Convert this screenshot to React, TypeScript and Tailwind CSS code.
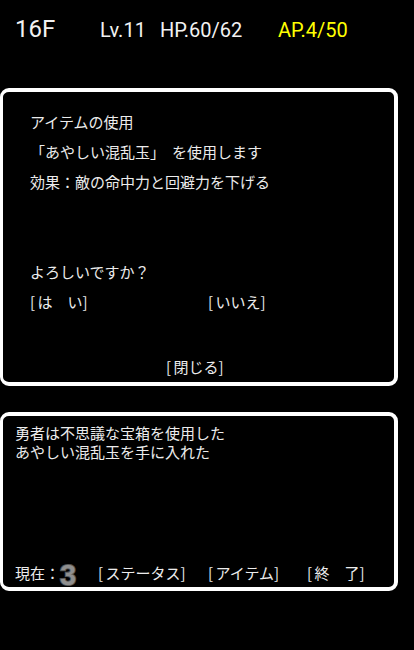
import React from "react";

const B = ({ c }: { c: string }) => (
  <span className="inline-block w-[7.5px]">{c}</span>
);

export default function App() {
  return (
    <div className="w-[414px] h-[650px] bg-black overflow-hidden">
      {/* header */}
      <div className="h-[88px] pt-[14px] pl-[15px] flex items-baseline font-['Roboto',sans-serif] text-[#f2f2f2]">
        <span className="w-[85px] text-[24px] leading-[30px]">16F</span>
        <span className="w-[60px] text-[20px] leading-[30px]">Lv.11</span>
        <span className="w-[118px] text-[20px] leading-[30px]">HP.60/62</span>
        <span className="text-[20px] leading-[30px] text-[#ffff00]">AP.4/50</span>
      </div>

      {/* dialog box */}
      <div className="w-[398px] h-[298px] border-4 border-l-[3px] border-white rounded-[9px] flex flex-col pl-[27px] pt-[15px] font-['Noto_Sans_CJK_JP',sans-serif] text-[15px] leading-[30px] text-[#ececec]">
        <div>アイテムの使用</div>
        <div>
          「あやしい混乱玉」<span className="inline-block w-[7px]" />を使用します
        </div>
        <div>効果：敵の命中力と回避力を下げる</div>
        <div className="h-[60px]" />
        <div>よろしいですか？</div>
        <div className="flex">
          <span className="w-[178px]">
            <B c="[" />は　い<B c="]" />
          </span>
          <span>
            <B c="[" />いいえ<B c="]" />
          </span>
        </div>
        <div className="mt-auto pl-[136px]">
          <B c="[" />閉じる<B c="]" />
        </div>
      </div>

      {/* message box */}
      <div className="mt-[26px] w-[398px] h-[179px] border-4 border-l-[3px] border-white rounded-[9px] flex flex-col pl-[12px] pt-[7px] pb-[3px] font-['Noto_Sans_CJK_JP',sans-serif] text-[15px] leading-[19px] text-[#ececec]">
        <div>勇者は不思議な宝箱を使用した</div>
        <div>あやしい混乱玉を手に入れた</div>
        <div className="mt-auto flex items-center h-[24px]">
          <span className="w-[45px]">現在：</span>
          <span className="w-[38px] h-[24px] flex items-center">
            <span className="font-['Liberation_Sans',sans-serif] font-bold text-[29px] leading-[24px] translate-y-[3px] text-[#8f8f8f] [-webkit-text-stroke:2px_#555555] [paint-order:stroke_fill]">
              3
            </span>
          </span>
          <span className="w-[110px]">
            <B c="[" />ステータス<B c="]" />
          </span>
          <span className="w-[99px]">
            <B c="[" />アイテム<B c="]" />
          </span>
          <span>
            <B c="[" />終　了<B c="]" />
          </span>
        </div>
      </div>
    </div>
  );
}
